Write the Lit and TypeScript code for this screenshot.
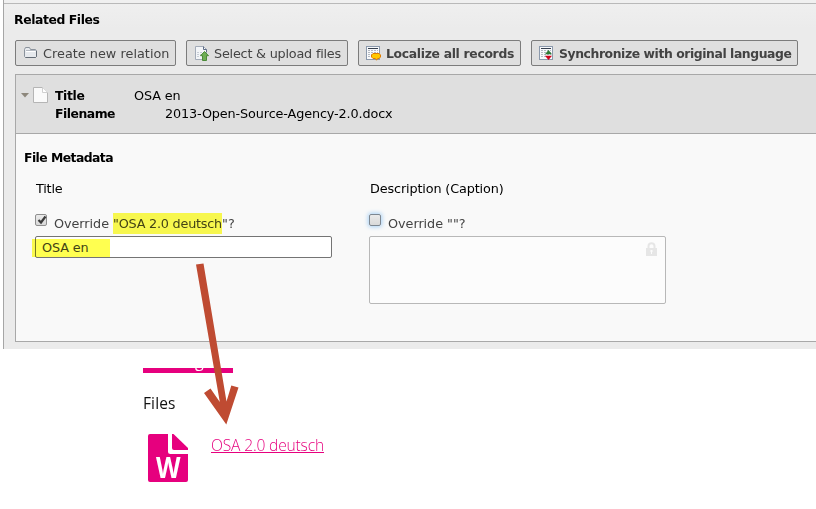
import { LitElement, html, svg, css } from "lit";
import { customElement, property } from "lit/decorators.js";

/** A single line of text whose tracking is adjusted to a given measure. */
@customElement("fit-text")
class FitText extends LitElement {
  @property({ type: Number }) measure = 0;
  @property() text = "";
  static styles = css`
    :host { display: inline-block; white-space: pre; }
    .t { display: inline-block; }
  `;
  render() {
    return html`<span class="t">${this.text}</span>`;
  }
  updated() {
    const el = this.renderRoot.querySelector(".t") as HTMLElement;
    el.style.letterSpacing = "0px";
    const w = el.getBoundingClientRect().width;
    el.style.letterSpacing = `${(this.measure - w) / this.text.length}px`;
  }
}

const fit = (text: string, measure: number) =>
  html`<fit-text .text=${text} .measure=${measure}></fit-text>`;

const folder = svg`
  <path d="M1.500 11.500V4.500L2.500 2.500H6.500L7.500 4.500H12.500L13.500 5.500V11.500L12.500 12.500H2.500Z" fill="#e6e9ed" stroke="#8a929c"/>
  <path d="M3 6.500H12.500" stroke="#fff"/><path d="M3 5.500H13" stroke="#b4bac2"/>
  <path d="M2.500 12.500H12.500L13.500 11.500V6" stroke="#646c76"/>`;
const upload = svg`
  <path d="M1.500 1.500H9.500L12.500 4.500V14.500H1.500Z" fill="#f3f5f8" stroke="#a3abb8"/>
  <path d="M9.500 1.500V4.500H12.500V7" fill="#fff" stroke="#5e6c86"/>
  <path d="M3 7.500H10M3 9.500H7M3 11.500H6" stroke="#c7cdd6" stroke-dasharray="2 1"/>
  <path d="M10.500 6.500L14.500 10.700H12.500V15.500H8.500V10.700H6.500Z" fill="#6fae55" stroke="#4b8a38"/>`;
const list = svg`
  <rect x="1.500" y="1.500" width="13" height="13" fill="#f8f9fb" stroke="#8b99ac"/>
  <path d="M3 3.500H13" stroke="#35404f"/>
  <path d="M3 5.500H13M3 7.500H13M3 9.500H13M3 11.500H13" stroke="#b3b9c2" stroke-dasharray="2 1"/>`;
const localize = svg`${list}
  <path d="M8 8.500H14L15.500 10V12L14 13.500H12.500L11.500 15.200L10.500 13.500H8L6.500 12V10Z" fill="#ffc800" stroke="#e07b00"/>`;
const sync = svg`${list}
  <path d="M10.500 5L14 9.200H7Z" fill="#2f7a35"/><path d="M10.500 15L7 10.800H14Z" fill="#d0021b"/>`;

@customElement("app-root")
class AppRoot extends LitElement {
  static styles = css`
    :host {
      display: block; position: relative; width: 816px; height: 509px; overflow: hidden;
      background: #fff; color: #000;
      font: 12.8px/18px "DejaVu Sans", Verdana, sans-serif;
    }
    * { box-sizing: border-box; }
    b, .bold { font-weight: 700; font-size: 12.4px; }
    .panel {
      margin-left: 3px; height: 349px; border-left: 1px solid #a6a6a6;
      background: #ebebeb; display: flex; flex-direction: column;
    }
    .edge { height: 4px; background: #f0f0f0; border-bottom: 1px solid #b9b9b9; flex: none; }
    .top { height: 70px; flex: none; padding: 7px 0 0 11px; background: linear-gradient(#efefef, #ebebeb 24px); }
    .heading { display: block; height: 18px; }
    .top .heading { margin-left: -1px; }
    .buttons { display: flex; gap: 10px; margin-top: 11px; }
    .btn {
      height: 26px; flex: none; display: flex; align-items: center; padding: 1px 0 0 7px;
      border: 1px solid #7c7c7c; border-radius: 2px; background: #dfdfdf; color: #434343; gap: 4px;
    }
    .btn svg { flex: none; margin-top: -1px; }
    .b1 { width: 161px; } .b2 { width: 162px; } .b3 { width: 163px; } .b4 { width: 267px; }
    .b3, .b4 { padding-left: 6px; gap: 5px; }
    .box { margin-left: 11px; height: 268px; flex: none; border: 1px solid #a8a8a8; border-right: 0; background: #f9f9f9; }
    .head { height: 59px; background: #dfdfdf; border-bottom: 1px solid #a8a8a8; display: flex; padding-top: 12px; }
    .tri { width: 8px; height: 5px; margin: 6px 4px 0 5px; }
    .page { margin-right: 7px; }
    .rows { display: flex; flex-direction: column; }
    .row { display: flex; height: 18px; }
    .key1 { width: 79px; } .key2 { width: 110px; }
    .body { padding: 15px 0 0 8px; }
    .fields { display: flex; padding: 13px 0 0 12px; }
    .field { width: 334px; }
    .label { height: 18px; }
    .override { display: flex; height: 21px; margin-top: 17px; color: #434343; }
    .check {
      width: 12px; height: 12px; margin: -1px 7px 0 -1px; border: 1px solid #8f8f8f; border-radius: 2px;
      background: linear-gradient(#eaeaea, #d9d9d9); flex: none;
    }
    .check svg { display: block; margin: -1px 0 0 0; }
    .focus { border-color: #7d8791; box-shadow: 0 0 4px 1px #a9d1f5; }
    .ovt { white-space: pre; }
    .mark { position: relative; }
    .mark::before {
      content: ""; position: absolute; left: 0px; top: -3px; width: 109px; height: 21px;
      background: #fdfd50; mix-blend-mode: multiply;
    }
    .input {
      width: 297px; height: 22px; margin-left: -1px; border: 1px solid #747474; border-radius: 2px;
      background: #fff; color: #434343; padding: 2px 6px; position: relative;
    }
    .input::after {
      content: ""; position: absolute; left: -4px; top: 2px; width: 78px; height: 18px;
      background: #ffff50; mix-blend-mode: multiply;
    }
    .area {
      width: 297px; height: 68px; margin-left: -1px; border: 1px solid #b8b8b8; border-radius: 2px;
      background: #fcfcfc; display: flex; justify-content: flex-end; padding: 5px 8px 0 0;
    }
    .site { padding-left: 143px; color: #111; font-family: "Open Sans", "Noto Sans", sans-serif; font-size: 16px; }
    .bar { width: 90px; height: 5px; margin-top: 19px; background: #e6007e; overflow: hidden; color: #fff; padding-left: 52px; }
    .bar span { display: block; margin-top: -17px; line-height: 20px; }
    .files { height: 24px; line-height: 24px; margin-top: 18px; font-size: 15.5px; }
    .item { display: flex; margin-top: 19px; padding-left: 5px; }
    .word { font: 700 29px "Open Sans", sans-serif; }
    .link { margin: -1px 0 0 23px; height: 20px; line-height: 24px; font-size: 15.6px; color: #e6007e; font-weight: 300; border-bottom: 1px solid #e6007e; }
    .arrow { position: absolute; left: 190px; top: 255px; }
  `;

  button(cls: string, icon: unknown, text: string, w: number) {
    return html`<div class="btn ${cls}"><svg width="16" height="16" fill="none">${icon}</svg>${fit(text, w)}</div>`;
  }

  render() {
    return html`
      <div class="panel">
        <div class="edge"></div>
        <div class="top">
          <b class="heading">${fit("Related Files", 85.5)}</b>
          <div class="buttons">
            ${this.button("b1", folder, "Create new relation", 126.5)}
            ${this.button("b2", upload, "Select & upload files", 127)}
            ${this.button("b3 bold", localize, "Localize all records", 128)}
            ${this.button("b4 bold", sync, "Synchronize with original language", 232.5)}
          </div>
        </div>
        <div class="box">
          <div class="head">
            <svg class="tri"><path d="M0 0H8L4 4.500Z" fill="#8d877c"/></svg>
            <svg class="page" width="15" height="17">
              <path d="M.5 .5H9.500L14.500 5.500V15.500H.5Z" fill="#fafafa" stroke="#b5b5b5"/>
              <path d="M9.500 .5V5.500H14.500" fill="#fff" stroke="#cfcfcf"/>
            </svg>
            <div class="rows">
              <div class="row"><b class="key1">${fit("Title", 29.5)}</b>${fit("OSA en", 46.5)}</div>
              <div class="row"><b class="key2">${fit("Filename", 60)}</b>${fit("2013-Open-Source-Agency-2.0.docx", 227.5)}</div>
            </div>
          </div>
          <div class="body">
            <b class="heading">${fit("File Metadata", 89)}</b>
            <div class="fields">
              <div class="field">
                <div class="label">${fit("Title", 26.5)}</div>
                <div class="override">
                  <span class="check"><svg width="12" height="12"><path d="M2.500 6L5 8.500L9.500 2.500" fill="none" stroke="#3c3c3c" stroke-width="2.200"/></svg></span>
                  <span class="ovt">${fit("Override ", 59)}<span class="mark">${fit('"OSA 2.0 deutsch', 109)}</span>${fit('"?', 13)}</span>
                </div>
                <div class="input">${fit("OSA en", 46.5)}</div>
              </div>
              <div class="field">
                <div class="label">${fit("Description (Caption)", 133.5)}</div>
                <div class="override">
                  <span class="check focus"></span>
                  <span class="ovt">${fit('Override ""?', 77.5)}</span>
                </div>
                <div class="area">
                  <svg width="11" height="14"><path d="M2.500 7V4Q2.500 1.200 5.500 1.200T8.500 4V7" fill="none" stroke="#e6e6e6" stroke-width="2"/><path d="M0 6H11V14H0Z" fill="#e6e6e6"/><path d="M4.500 8H6.500V10H6V12H5V10H4.500Z" fill="#fcfcfc"/></svg>
                </div>
              </div>
            </div>
          </div>
        </div>
      </div>
      <div class="site">
        <div class="bar"><span>g</span></div>
        <div class="files">${fit("Files", 32.5)}</div>
        <div class="item">
          <svg width="40" height="48">
            <path d="M2 0H20V17.500Q20 20 22.500 20H40V46Q40 48 38 48H2Q0 48 0 46V2Q0 0 2 0Z" fill="#e6007e"/>
            <path d="M24 0H25.500L40 14V16H26Q24 16 24 14Z" fill="#e6007e"/>
            <text class="word" x="8" y="44" fill="#fff" textLength="24.500" lengthAdjust="spacingAndGlyphs">W</text>
          </svg>
          <div class="link">${fit("OSA 2.0 deutsch", 113)}</div>
        </div>
      </div>
      <svg class="arrow" width="60" height="175">
        <path d="M6 9.500L13.500 8.500L36.500 146.500L41.300 130.500L48.500 132.500L36.300 169.500L14 138L20.500 133.500L29.800 147Z" fill="#bf4b32"/>
      </svg>
    `;
  }
}
